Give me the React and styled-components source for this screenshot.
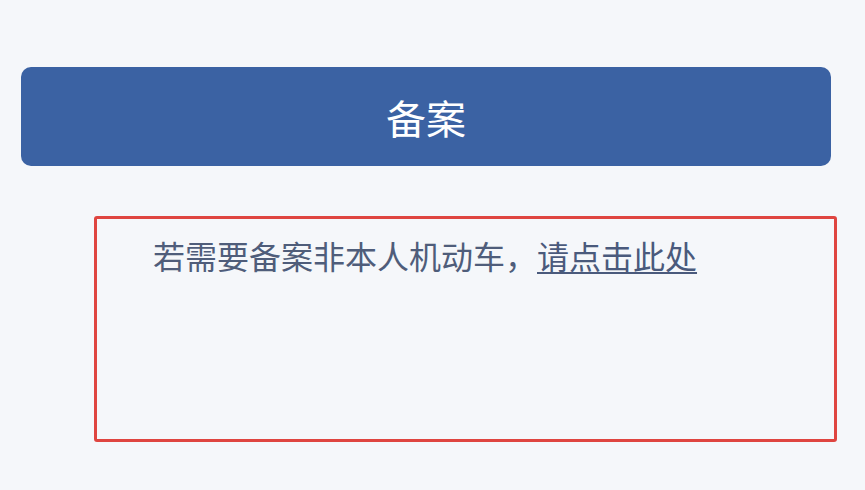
import React from 'react'
import styled, { createGlobalStyle } from 'styled-components'

const GlobalStyle = createGlobalStyle`
  html, body {
    margin: 0;
    padding: 0;
    background: #f5f7fa;
    font-family: "Noto Sans CJK SC", "Noto Sans", sans-serif;
  }
`

const Page = styled.div`
  width: 865px;
  height: 490px;
  padding: 67px 0 0 21px;
  box-sizing: border-box;
  display: flex;
  flex-direction: column;
  background: #f5f7fa;
`

const SubmitButton = styled.button`
  width: 810px;
  height: 99px;
  border: none;
  border-radius: 10px;
  background: #3b62a3;
  color: #ffffff;
  font-family: inherit;
  font-size: 40px;
  font-weight: 400;
  display: flex;
  align-items: center;
  justify-content: center;
  padding: 0;
  cursor: pointer;
`

const NoticeBox = styled.div`
  margin: 50px 0 0 73px;
  width: 743px;
  height: 226px;
  box-sizing: border-box;
  border: 3px solid #df4540;
  border-radius: 3px;
  padding: 16px 0 0 56px;
`

const NoticeText = styled.p`
  margin: 0;
  font-size: 32px;
  line-height: 40px;
  color: #4f5d7a;
  white-space: nowrap;
`

const NoticeLink = styled.a`
  color: #4a5a7c;
  text-decoration: underline;
  text-underline-offset: 3px;
  text-decoration-thickness: 2px;
  cursor: pointer;
`

export default function App() {
  return (
    <>
      <GlobalStyle />
      <Page>
        <SubmitButton>备案</SubmitButton>
        <NoticeBox>
          <NoticeText>
            若需要备案非本人机动车，<NoticeLink>请点击此处</NoticeLink>
          </NoticeText>
        </NoticeBox>
      </Page>
    </>
  )
}
